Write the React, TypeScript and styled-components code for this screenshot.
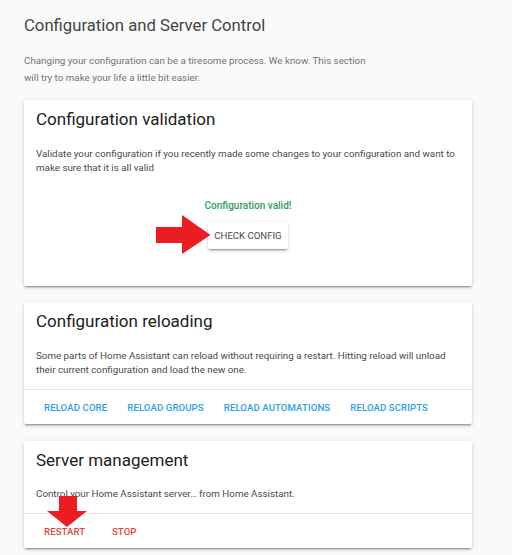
import React from "react";
import styled, { createGlobalStyle } from "styled-components";

const Global = createGlobalStyle`
  html, body {
    margin: 0;
    padding: 0;
    background: #fafafa;
    font-family: Roboto, "Noto Sans", Arial, sans-serif;
  }
`;

const Page = styled.div`
  position: relative;
  width: 448px;
  padding: 14px 0 7px 24px;
`;

const PageTitle = styled.h1`
  margin: 0;
  font-size: 16.7px;
  line-height: 24px;
  font-weight: 400;
  color: #444;
`;

const Intro = styled.p`
  margin: 13.5px 0 14.5px;
  width: 355px;
  font-size: 9.8px;
  line-height: 17px;
  color: #737373;
`;

const Card = styled.section`
  background: #fff;
  border-radius: 2px;
  box-shadow: 0 2px 2px 0 rgba(0, 0, 0, 0.14), 0 1px 5px 0 rgba(0, 0, 0, 0.12),
    0 3px 1px -2px rgba(0, 0, 0, 0.2);
  & + & {
    margin-top: 16.5px;
  }
`;

const CardTitle = styled.h2`
  margin: 0;
  padding: 7px 12px 0;
  font-size: 17px;
  line-height: 24px;
  font-weight: 400;
  color: #212121;
`;

const CardBody = styled.div`
  padding: 15.5px 12px 11.5px;
  font-size: 9.8px;
  line-height: 14.5px;
  color: #4a4a4a;
`;

const Validate = styled.div`
  display: flex;
  flex-direction: column;
  align-items: center;
  margin: 22px 0 25px;
`;

const ValidText = styled.div`
  font-size: 10px;
  line-height: 15px;
  font-weight: 500;
  color: #2f9e5c;
  margin-bottom: 9.5px;
`;

const RaisedButton = styled.button`
  height: 27px;
  padding: 0 6px;
  border: 0;
  border-radius: 2px;
  background: #fff;
  font-family: inherit;
  font-size: 9.6px;
  font-weight: 400;
  color: #4a4a4a;
  white-space: nowrap;
  box-shadow: 0 2px 2px 0 rgba(0, 0, 0, 0.14), 0 1px 5px 0 rgba(0, 0, 0, 0.12),
    0 3px 1px -2px rgba(0, 0, 0, 0.2);
`;

const Actions = styled.div`
  display: flex;
  gap: 4px;
  padding: 4px 12px;
  border-top: 1px solid #e8e8e8;
`;

const FlatButton = styled.button<{ $tone: "blue" | "red" }>`
  flex: none;
  height: 26px;
  min-width: 54px;
  padding: 0 8px;
  border: 0;
  background: transparent;
  font-family: inherit;
  font-size: 9.6px;
  font-weight: 500;
  letter-spacing: 0.01em;
  white-space: nowrap;
  color: ${(p) => (p.$tone === "blue" ? "#2d9fe3" : "#dc4848")};
`;

const Arrow = styled.svg`
  position: absolute;
  pointer-events: none;
`;

export default function App() {
  return (
    <>
      <Global />
      <Page>
        <PageTitle>Configuration and Server Control</PageTitle>
        <Intro>
          Changing your configuration can be a tiresome process. We know. This
          section will try to make your life a little bit easier.
        </Intro>

        <Card>
          <CardTitle>Configuration validation</CardTitle>
          <CardBody>
            Validate your configuration if you recently made some changes to
            your configuration and want to make sure that it is all valid
            <Validate>
              <ValidText>Configuration valid!</ValidText>
              <RaisedButton>CHECK CONFIG</RaisedButton>
            </Validate>
          </CardBody>
        </Card>

        <Card>
          <CardTitle>Configuration reloading</CardTitle>
          <CardBody>
            Some parts of Home Assistant can reload without requiring a restart.
            Hitting reload will unload their current configuration and load the
            new one.
          </CardBody>
          <Actions>
            <FlatButton $tone="blue">RELOAD CORE</FlatButton>
            <FlatButton $tone="blue">RELOAD GROUPS</FlatButton>
            <FlatButton $tone="blue">RELOAD AUTOMATIONS</FlatButton>
            <FlatButton $tone="blue">RELOAD SCRIPTS</FlatButton>
          </Actions>
        </Card>

        <Card>
          <CardTitle>Server management</CardTitle>
          <CardBody>Control your Home Assistant server… from Home Assistant.</CardBody>
          <Actions>
            <FlatButton $tone="red">RESTART</FlatButton>
            <FlatButton $tone="red">STOP</FlatButton>
          </Actions>
        </Card>

        <Arrow
          style={{ left: 156, top: 214, width: 55, height: 41 }}
          viewBox="0 0 55 41"
        >
          <polygon
            points="0,13 26,13 26,1 54.5,21 26,40 26,29 0,29"
            fill="#ec1c24"
          />
        </Arrow>
        <Arrow
          style={{ left: 46, top: 495, width: 42, height: 33 }}
          viewBox="0 0 42 33"
        >
          <polygon
            points="13,1 31,1 31,16 41,16 21,32 1,16 13,16"
            fill="#ec1c24"
          />
        </Arrow>
      </Page>
    </>
  );
}
